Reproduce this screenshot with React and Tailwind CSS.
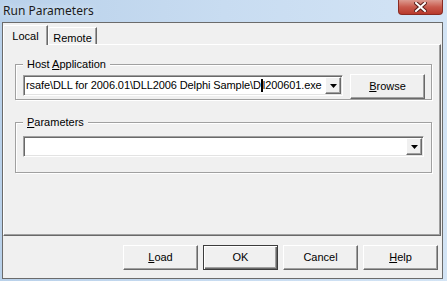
import React from 'react';

const raised =
  'border border-t-white border-l-white border-r-[#696969] border-b-[#696969] shadow-[inset_-1px_-1px_0_#a0a0a0]';
const sunken =
  'border border-t-[#a0a0a0] border-l-[#a0a0a0] border-r-white border-b-white shadow-[inset_1px_1px_0_#696969,inset_-1px_-1px_0_#e3e3e3]';

function Btn({ children, isDefault }) {
  const frame = isDefault
    ? 'border border-[#3c3c3c] shadow-[inset_1px_1px_0_#fff,inset_-1px_-1px_0_#696969,inset_-2px_-2px_0_#a0a0a0]'
    : raised;
  return (
    <button className={`w-[75px] h-[25px] bg-[#f0f0f0] flex items-center justify-center text-black ${frame}`}>
      {children}
    </button>
  );
}

function Combo({ width, children }) {
  return (
    <div className={`h-[21px] bg-white flex items-stretch p-[1px] ${sunken}`} style={{ width }}>
      <div className="flex-1 flex items-center pl-[1px] overflow-hidden whitespace-nowrap tracking-[-0.1px]">
        {children}
      </div>
      <div className={`w-[16px] bg-[#f0f0f0] flex items-center justify-center ${raised}`}>
        <svg width="7" height="4" viewBox="0 0 7 4">
          <path d="M0 0h7L3.5 4z" fill="#000" />
        </svg>
      </div>
    </div>
  );
}

function GroupBox({ label, height, children }) {
  return (
    <div
      className="relative ml-[11px] w-[417px] border border-[#a0a0a0] shadow-[inset_1px_1px_0_#fff,1px_1px_0_#fff]"
      style={{ height }}
    >
      <span className="absolute -top-[8px] left-[7px] bg-[#f0f0f0] px-[4px] leading-[14px]">{label}</span>
      {children}
    </div>
  );
}

export default function App() {
  return (
    <div className="w-[447px] h-[281px] overflow-hidden flex flex-col bg-gradient-to-r from-[#b9d1ea] via-[#c8dcf1] to-[#d3e4f5] font-['Liberation_Sans',sans-serif] text-[11px] text-black">
      {/* title bar */}
      <div className="h-[22px] flex items-start justify-between pl-[3px]">
        <span className="mt-[2px] font-['Noto_Sans',sans-serif] text-[12px] text-[#1b1b1b] [text-shadow:0_0_6px_#e6f0fa]">
          Run Parameters
        </span>
        <div className="w-[45px] h-[15px] mr-[4px] rounded-b-[4px] border border-t-0 border-[#8a2b22] bg-gradient-to-b from-[#dc9a90] via-[#c8594c] to-[#b8392b] flex items-center justify-center">
          <svg width="13" height="10" viewBox="0 0 13 10">
            <path d="M2 1l9 8M11 1l-9 8" stroke="#5a1f1a" strokeWidth="4" strokeLinecap="square" />
            <path d="M2 1l9 8M11 1l-9 8" stroke="#fff" strokeWidth="2" strokeLinecap="square" />
          </svg>
        </div>
      </div>

      {/* client area */}
      <div className="flex-1 ml-[2px] mr-[4px] mb-[2px] border border-[#6b6b6b] bg-[#f0f0f0] flex flex-col">
        <div className="flex items-end pt-[2px]">
          <div className="relative z-10 -mb-[1px] w-[45px] h-[20px] bg-[#f0f0f0] border-l border-t border-white border-r border-r-[#696969] shadow-[inset_-1px_0_0_#a0a0a0] rounded-tl-[2px] flex items-start justify-center pt-[2px]">
            Local
          </div>
          <div className="w-[49px] h-[17px] bg-[#f0f0f0] border-l border-t border-white border-r border-r-[#696969] shadow-[inset_-1px_0_0_#a0a0a0] rounded-tl-[2px] flex items-start justify-center pt-[2px]">
            Remote
          </div>
        </div>

        <div className="h-[192px] mr-[1px] border border-t-white border-l-white border-r-[#696969] border-b-[#696969] shadow-[inset_-1px_-1px_0_#a0a0a0] flex flex-col pt-[19px]">
          <GroupBox
            label={
              <>
                Host <u>A</u>pplication
              </>
            }
            height="36px"
          >
            <div className="flex items-start">
              <div className="ml-[7px] mt-[10px]">
                <Combo width="320px">
                  rsafe\DLL for 2006.01\DLL2006 Delphi Sample\D
                  <span className="inline-block w-[2px] h-[13px] bg-black" />
                  l200601.exe
                </Combo>
              </div>
              <div className="ml-[7px] mt-[9px]">
                <Btn>
                  <span>
                    <u>B</u>rowse
                  </span>
                </Btn>
              </div>
            </div>
          </GroupBox>

          <div className="mt-[22px]">
            <GroupBox
              label={
                <>
                  <u>P</u>arameters
                </>
              }
              height="51px"
            >
              <div className="ml-[7px] mt-[13px]">
                <Combo width="401px" />
              </div>
            </GroupBox>
          </div>
        </div>

        <div className="flex justify-end gap-[5px] pr-[4px] mt-[9px]">
          <Btn>
            <span>
              <u>L</u>oad
            </span>
          </Btn>
          <Btn isDefault>OK</Btn>
          <Btn>Cancel</Btn>
          <Btn>
            <span>
              <u>H</u>elp
            </span>
          </Btn>
        </div>
      </div>
    </div>
  );
}
